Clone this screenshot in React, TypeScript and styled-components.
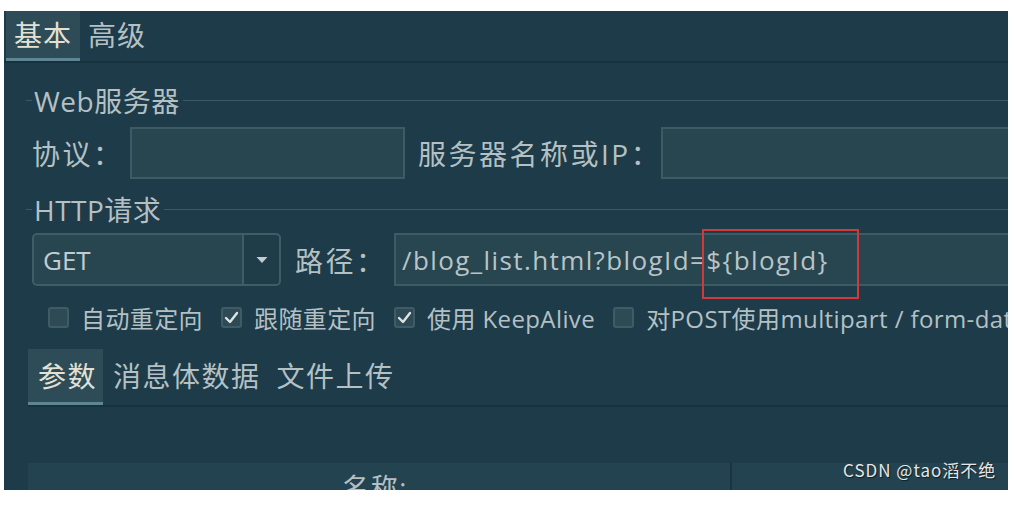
import * as React from "react";
import styled, { createGlobalStyle } from "styled-components";

const GlobalStyle = createGlobalStyle`
  html, body {
    margin: 0;
    padding: 0;
    background: #ffffff;
    height: 508px;
    overflow: hidden;
  }
  body {
    font-family: "Open Sans", "Noto Sans CJK SC", sans-serif;
  }
`;

const App: React.FC = () => {
  return (
    <>
      <GlobalStyle />
      <Frame>
        <TabBar>
          <Tab $active>基本</Tab>
          <Tab>高级</Tab>
        </TabBar>
        <Panel>
          <Legend>
            <span>Web服务器</span>
          </Legend>
          <Row $top={11}>
            <Label $width={98}>协议：</Label>
            <TextBox $width={275} />
            <Label $gap={13} $width={243}>
              服务器名称或IP：
            </Label>
            <TextBox $width={500} />
          </Row>
          <Legend $top={15}>
            <span>HTTP请求</span>
          </Legend>
          <Row $top={9}>
            <Select>
              <SelectValue>GET</SelectValue>
              <SelectArrow>
                <svg width="12" height="8" viewBox="0 0 12 8">
                  <path d="M0.5 1 L11.5 1 L6 7 Z" fill="#c3ccd0" />
                </svg>
              </SelectArrow>
            </Select>
            <Label $gap={14} $width={99}>
              路径：
            </Label>
            <PathBox>
              /blog_list.html?blogId=${"{blogId}"}
              <Highlight />
            </PathBox>
          </Row>
          <CheckRow>
            <CheckItem label="自动重定向" />
            <CheckItem label="跟随重定向" checked />
            <CheckItem label="使用 KeepAlive" checked />
            <CheckItem label="对POST使用multipart / form-data" />
          </CheckRow>
          <SubTabBar>
            <SubTab $active>参数</SubTab>
            <SubTab>消息体数据</SubTab>
            <SubTab>文件上传</SubTab>
          </SubTabBar>
          <TableHeader>
            <HeaderCell $width={711}>名称:</HeaderCell>
            <HeaderCell $width={400} />
          </TableHeader>
        </Panel>
        <Watermark>CSDN @tao滔不绝</Watermark>
      </Frame>
    </>
  );
};

export default App;

const CheckItem: React.FC<{ label: string; checked?: boolean }> = ({
  label,
  checked,
}) => {
  return (
    <CheckStyles>
      <Box>
        {checked && (
          <svg width="15" height="13" viewBox="0 0 15 13">
            <path
              d="M2 7 L6 11 L13 2"
              fill="none"
              stroke="#dfe3e4"
              strokeWidth="2.4"
              strokeLinecap="round"
              strokeLinejoin="round"
            />
          </svg>
        )}
      </Box>
      <span>{label}</span>
    </CheckStyles>
  );
};

const Frame = styled.div`
  position: relative;
  margin: 11px 0 0 4px;
  width: 1004px;
  height: 479px;
  background: #1d3b48;
  overflow: hidden;
  display: flex;
  flex-direction: column;
  color: #b4c0c4;
`;

const TabBar = styled.div`
  display: flex;
  height: 50px;
  padding-left: 2px;
  border-bottom: 2px solid #17313d;
  flex-shrink: 0;
`;

const Tab = styled.div<{ $active?: boolean }>`
  display: flex;
  align-items: center;
  padding: 0 8px 4px;
  font-size: 28px;
  letter-spacing: 1px;
  color: ${(p) => (p.$active ? "#e4e1d3" : "#b4c0c4")};
  background: ${(p) => (p.$active ? "#2d4c58" : "transparent")};
  box-shadow: ${(p) => (p.$active ? "inset 0 -3px 0 #5e8594" : "none")};
`;

const Panel = styled.div`
  display: flex;
  flex-direction: column;
  width: 1100px;
  padding-left: 24px;
`;

const Legend = styled.div<{ $top?: number }>`
  display: flex;
  align-items: center;
  height: 30px;
  margin-top: ${(p) => p.$top ?? 22}px;
  margin-left: -2px;
  font-size: 28px;
  letter-spacing: 0.5px;
  color: #b4c0c4;
  &::before {
    content: "";
    width: 6px;
    height: 1px;
    background: #3a5965;
  }
  &::after {
    content: "";
    flex: 1;
    height: 1px;
    background: #3a5965;
  }
  > span {
    padding: 0 3px 0 2px;
  }
`;

const Row = styled.div<{ $top?: number }>`
  display: flex;
  align-items: center;
  height: 53px;
  margin-top: ${(p) => p.$top ?? 0}px;
  padding-left: 4px;
`;

const Label = styled.span<{ $gap?: number; $width: number }>`
  flex-shrink: 0;
  width: ${(p) => p.$width}px;
  margin-left: ${(p) => p.$gap ?? 0}px;
  font-size: 28px;
  letter-spacing: 2.5px;
  white-space: nowrap;
`;

const TextBox = styled.div<{ $width: number }>`
  flex-shrink: 0;
  width: ${(p) => p.$width}px;
  height: 52px;
  box-sizing: border-box;
  background: #28464f;
  border: 2px solid #3d5b64;
`;

const Select = styled.div`
  display: flex;
  flex-shrink: 0;
  width: 249px;
  height: 53px;
  box-sizing: border-box;
  background: #28464f;
  border: 2px solid #3f5d67;
  border-radius: 5px;
`;

const SelectValue = styled.div`
  flex: 1;
  display: flex;
  align-items: center;
  padding-left: 9px;
  font-size: 26px;
  color: #c3ccd0;
  border-right: 2px solid #3f5d67;
`;

const SelectArrow = styled.div`
  width: 35px;
  display: grid;
  place-items: center;
  background: #1f3d49;
  border-radius: 0 4px 4px 0;
`;

const PathBox = styled.div`
  position: relative;
  display: flex;
  align-items: center;
  flex-shrink: 0;
  width: 700px;
  height: 53px;
  box-sizing: border-box;
  padding-left: 6px;
  background: #28464f;
  border: 2px solid #3d5b64;
  font-size: 26px;
  letter-spacing: 1.4px;
  color: #b9c4c8;
  white-space: nowrap;
`;

const Highlight = styled.div`
  position: absolute;
  left: 306px;
  top: -6px;
  width: 157px;
  height: 70px;
  box-sizing: border-box;
  border: 2px solid #d2393a;
`;

const CheckRow = styled.div`
  display: flex;
  align-items: center;
  gap: 18px;
  height: 30px;
  margin-top: 16px;
  padding-left: 20px;
`;

const CheckStyles = styled.div`
  display: flex;
  align-items: center;
  gap: 12px;
  font-size: 24px;
  letter-spacing: 0.4px;
  white-space: nowrap;
  > span {
    color: #b4c0c4;
  }
`;

const Box = styled.div`
  width: 21px;
  height: 21px;
  box-sizing: border-box;
  display: grid;
  place-items: center;
  background: #2e4b55;
  border: 2px solid #3f5c66;
  border-radius: 3px;
`;

const SubTabBar = styled.div`
  display: flex;
  height: 56px;
  margin-top: 17px;
  border-bottom: 2px solid #17313d;
`;

const SubTab = styled.div<{ $active?: boolean }>`
  display: flex;
  align-items: center;
  padding: 0 6px 4px 10px;
  font-size: 28px;
  letter-spacing: 1.5px;
  color: ${(p) => (p.$active ? "#e4e1d3" : "#b4c0c4")};
  background: ${(p) => (p.$active ? "#2d4c58" : "transparent")};
  box-shadow: ${(p) => (p.$active ? "inset 0 -3px 0 #5e8594" : "none")};
`;

const TableHeader = styled.div`
  display: flex;
  height: 60px;
  margin-top: 56px;
  background: #244350;
`;

const HeaderCell = styled.div<{ $width: number }>`
  width: ${(p) => p.$width}px;
  box-sizing: border-box;
  border-right: 2px solid #1a3542;
  text-align: center;
  padding-top: 4px;
  padding-right: 8px;
  font-size: 27px;
  letter-spacing: 1.5px;
  color: #b4c0c4;
`;

const Watermark = styled.div`
  position: absolute;
  left: 839px;
  top: 446px;
  font-family: "Noto Sans CJK SC", sans-serif;
  font-size: 17px;
  letter-spacing: 1px;
  color: #e6e6e6;
  text-shadow: 1px 1px 1px #0d1d24;
  white-space: nowrap;
`;
